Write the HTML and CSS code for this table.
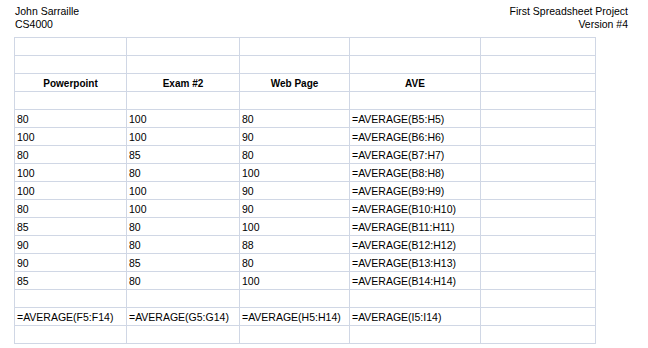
FILE: index.html
```html
<!DOCTYPE html>
<html>
<head>
<meta charset="utf-8">
<link rel="stylesheet" href="styles.css">
</head>
<body>
<div class="page">
  <div class="header">
    <div class="hleft">John Sarraille<br>CS4000</div>
    <div class="hright">First Spreadsheet Project<br>Version #4</div>
  </div>
  <div class="sheet">
    <div class="c"></div><div class="c"></div><div class="c"></div><div class="c"></div><div class="c"></div>
    <div class="c"></div><div class="c"></div><div class="c"></div><div class="c"></div><div class="c"></div>
    <div class="c h">Powerpoint</div><div class="c h">Exam #2</div><div class="c h">Web Page</div><div class="c h">AVE</div><div class="c"></div>
    <div class="c"></div><div class="c"></div><div class="c"></div><div class="c"></div><div class="c"></div>
    <div class="c">80</div><div class="c">100</div><div class="c">80</div><div class="c">=AVERAGE(B5:H5)</div><div class="c"></div>
    <div class="c">100</div><div class="c">100</div><div class="c">90</div><div class="c">=AVERAGE(B6:H6)</div><div class="c"></div>
    <div class="c">80</div><div class="c">85</div><div class="c">80</div><div class="c">=AVERAGE(B7:H7)</div><div class="c"></div>
    <div class="c">100</div><div class="c">80</div><div class="c">100</div><div class="c">=AVERAGE(B8:H8)</div><div class="c"></div>
    <div class="c">100</div><div class="c">100</div><div class="c">90</div><div class="c">=AVERAGE(B9:H9)</div><div class="c"></div>
    <div class="c">80</div><div class="c">100</div><div class="c">90</div><div class="c">=AVERAGE(B10:H10)</div><div class="c"></div>
    <div class="c">85</div><div class="c">80</div><div class="c">100</div><div class="c">=AVERAGE(B11:H11)</div><div class="c"></div>
    <div class="c">90</div><div class="c">80</div><div class="c">88</div><div class="c">=AVERAGE(B12:H12)</div><div class="c"></div>
    <div class="c">90</div><div class="c">85</div><div class="c">80</div><div class="c">=AVERAGE(B13:H13)</div><div class="c"></div>
    <div class="c">85</div><div class="c">80</div><div class="c">100</div><div class="c">=AVERAGE(B14:H14)</div><div class="c"></div>
    <div class="c"></div><div class="c"></div><div class="c"></div><div class="c"></div><div class="c"></div>
    <div class="c">=AVERAGE(F5:F14)</div><div class="c">=AVERAGE(G5:G14)</div><div class="c">=AVERAGE(H5:H14)</div><div class="c">=AVERAGE(I5:I14)</div><div class="c"></div>
    <div class="c"></div><div class="c"></div><div class="c"></div><div class="c"></div><div class="c"></div>
  </div>
</div>
</body>
</html>
```
FILE: styles.css
```css
html, body {
  margin: 0;
  padding: 0;
  overflow: hidden;
  background: #ffffff;
}
.page {
  width: 648px;
  height: 348px;
  overflow: hidden;
  font-family: "Liberation Sans", Arial, sans-serif;
  font-size: 10.5px;
  color: #000000;
}
.header {
  display: flex;
  justify-content: space-between;
  padding: 5px 20px 0 15px;
  height: 37px;
  box-sizing: border-box;
  line-height: 13px;
}
.hright {
  text-align: right;
}
.sheet {
  margin-left: 14px;
  display: grid;
  grid-template-columns: 111px 112px 109px 130px 114px;
  grid-auto-rows: 17px;
  gap: 1px;
  padding: 1px;
  background: #d0d7e5;
  width: max-content;
}
.c {
  background: #ffffff;
  box-sizing: border-box;
  padding: 2px 0 0 2px;
  line-height: 15px;
  white-space: nowrap;
  overflow: visible;
}
.h {
  font-weight: bold;
  font-size: 10px;
  text-align: center;
  padding-left: 0;
}
```
